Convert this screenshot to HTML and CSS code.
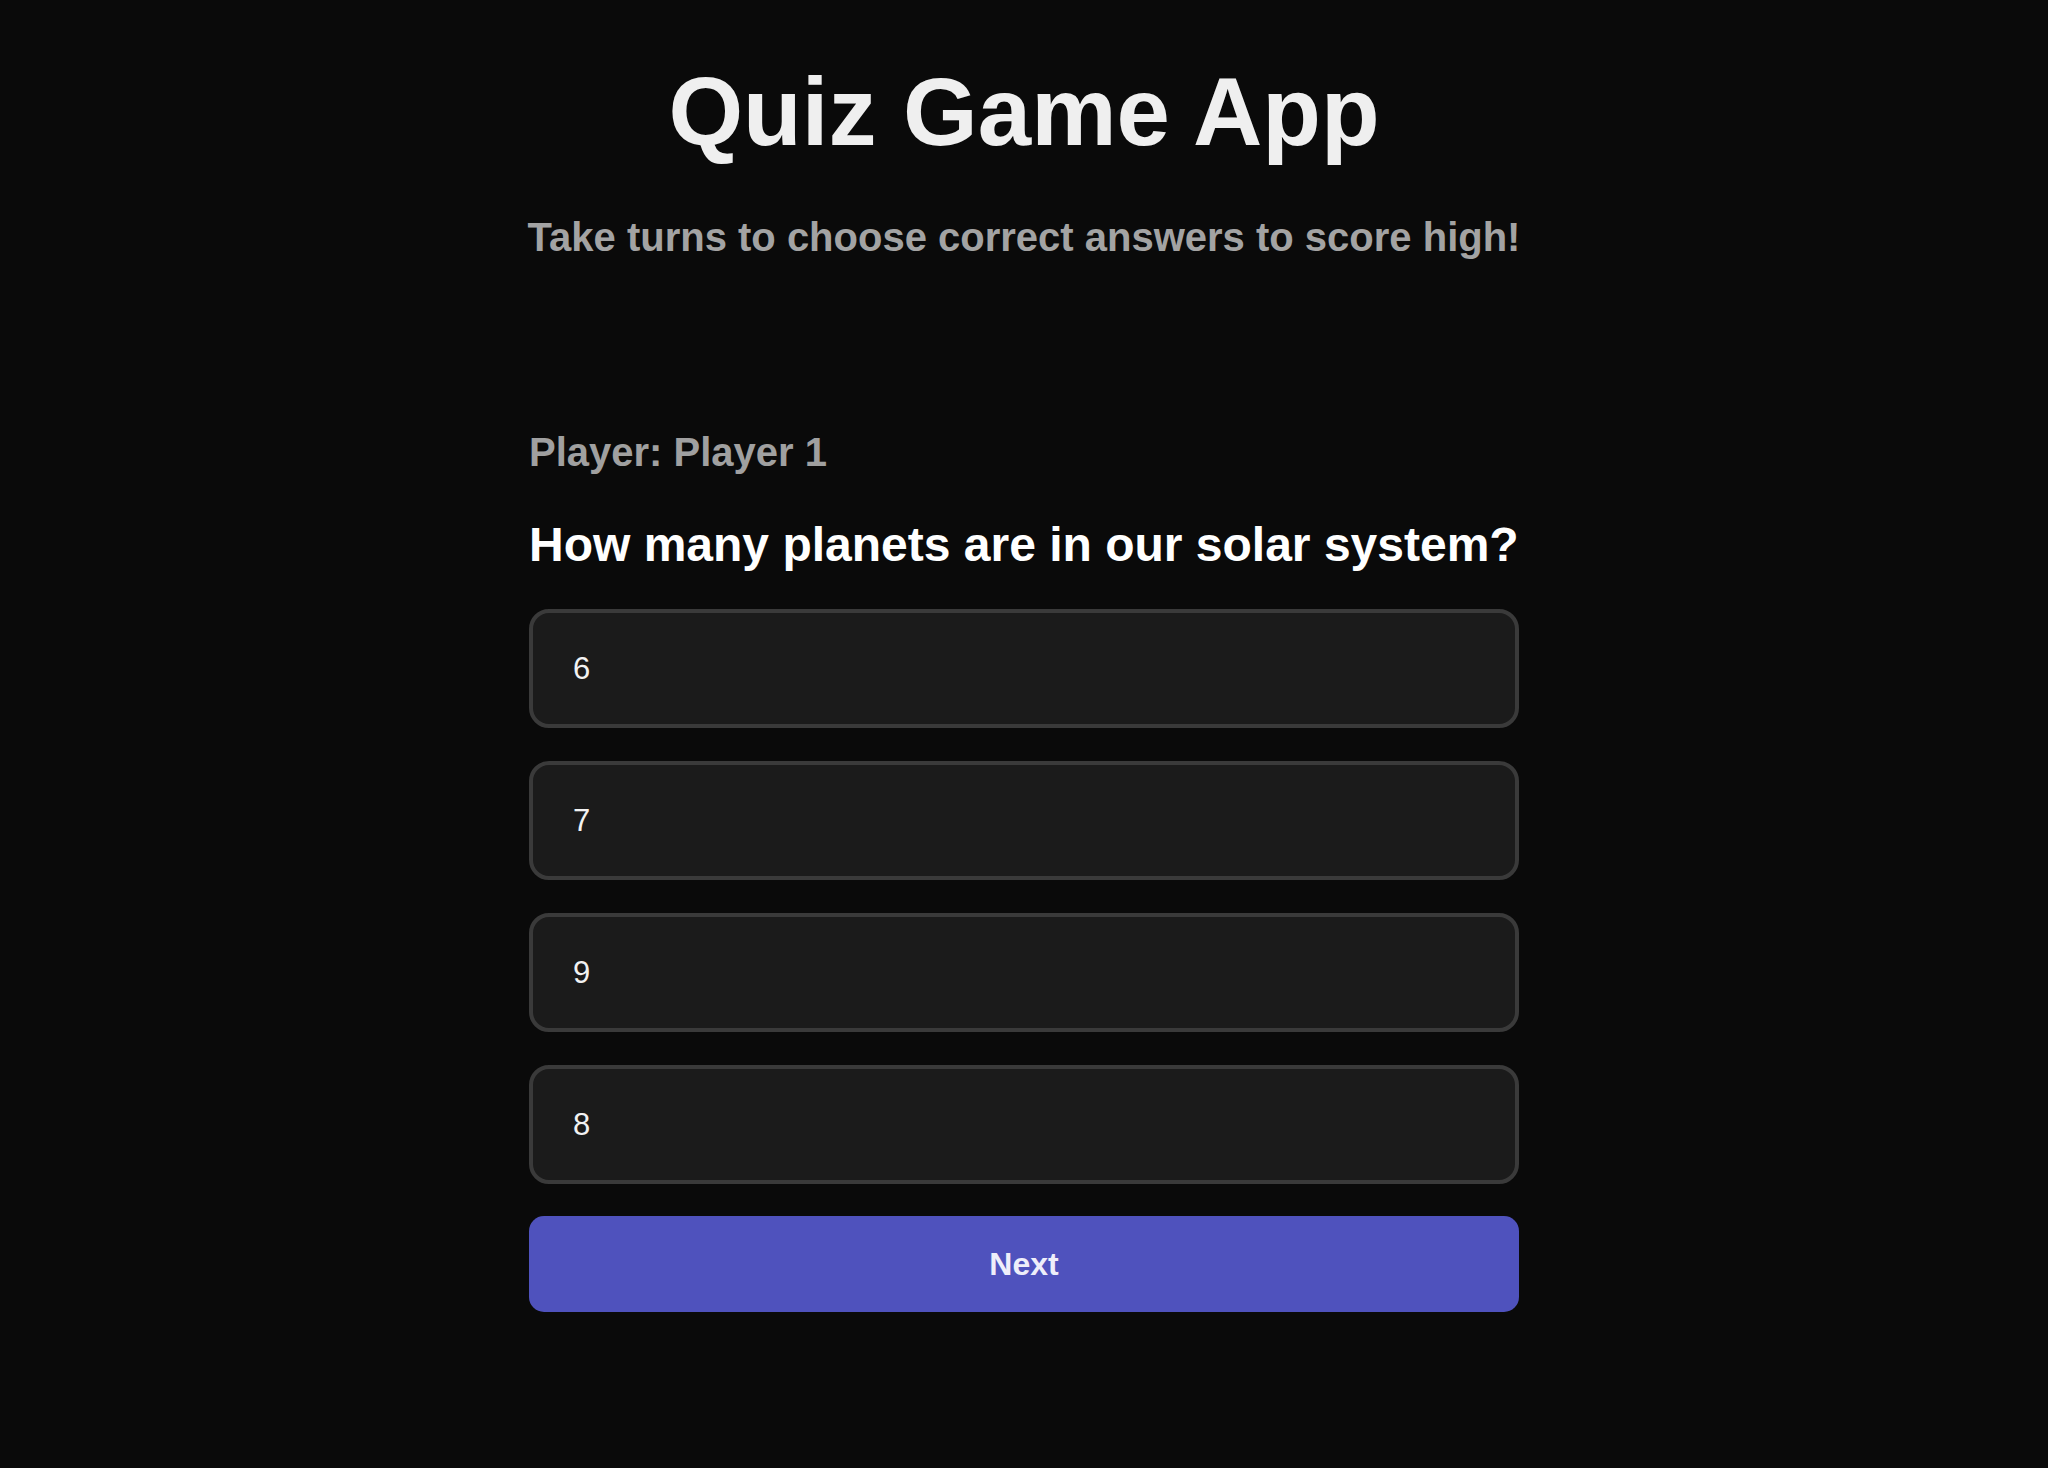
FILE: index.html
```html
<!DOCTYPE html>
<html lang="en">
<head>
<meta charset="utf-8">
<title>Quiz Game App</title>
<link rel="stylesheet" href="styles.css">
</head>
<body>
<div class="app">
  <header class="hero">
    <h1 class="title">Quiz Game App</h1>
    <p class="subtitle">Take turns to choose correct answers to score high!</p>
  </header>
  <main class="quiz">
    <div class="player">Player: Player 1</div>
    <h2 class="question">How many planets are in our solar system?</h2>
    <div class="options">
      <button class="option">6</button>
      <button class="option">7</button>
      <button class="option">9</button>
      <button class="option">8</button>
    </div>
    <button class="next">Next</button>
  </main>
</div>
</body>
</html>
```
FILE: styles.css
```css
* { box-sizing: border-box; }
html, body {
  margin: 0;
  padding: 0;
  background: #0a0a0a;
  font-family: "Liberation Sans", Arial, sans-serif;
  min-height: 100%;
}
body { min-height: 1468px; }
.app {
  width: 990px;
  margin: 0 auto;
  padding-top: 57px;
  display: flex;
  flex-direction: column;
}
.hero {
  display: flex;
  flex-direction: column;
  align-items: center;
}
.title {
  margin: 0;
  font-size: 96px;
  font-weight: 700;
  color: #efefef;
  line-height: normal;
}
.subtitle {
  margin: 48px 0 0;
  font-size: 40px;
  font-weight: 700;
  color: #a3a3a3;
  white-space: nowrap;
}
.quiz {
  margin-top: 170px;
  display: flex;
  flex-direction: column;
}
.player {
  font-size: 40px;
  font-weight: 700;
  color: #a0a0a0;
}
.question {
  margin: 42px 0 0;
  font-size: 48px;
  font-weight: 700;
  color: #ffffff;
  line-height: normal;
}
.options {
  margin-top: 37px;
  display: flex;
  flex-direction: column;
  gap: 33px;
}
.option {
  display: block;
  width: 100%;
  height: 119px;
  padding: 0 40px;
  text-align: left;
  background: #1b1b1b;
  border: 4px solid #3a3a3a;
  border-radius: 20px;
  color: #f2f2f2;
  font-family: "Liberation Sans", Arial, sans-serif;
  font-size: 31px;
}
.next {
  margin-top: 32px;
  width: 100%;
  height: 96px;
  border: none;
  border-radius: 15px;
  background: #4f52bd;
  color: #eeeefa;
  font-family: "Liberation Sans", Arial, sans-serif;
  font-size: 32px;
  font-weight: 700;
}
```
